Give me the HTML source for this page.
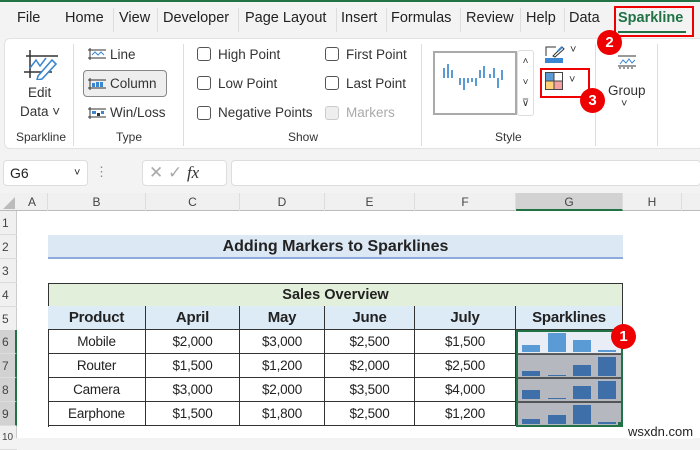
<!DOCTYPE html>
<html><head><meta charset="utf-8"><style>
*{margin:0;padding:0;box-sizing:border-box}
body{width:700px;height:438px;overflow:hidden;background:#f3f3f3;font-family:"Liberation Sans",sans-serif;position:relative;color:#222}
.a{position:absolute}
.tab{position:absolute;top:10px;font-size:14.5px;color:#222}
.sep{position:absolute;top:8px;width:1px;height:24px;background:#ddd}
.rib{position:absolute;left:4px;top:38px;width:700px;height:111px;background:#fff;border-radius:6px;border:1px solid #e2e2e2}
.t{position:absolute;font-size:13.5px;color:#333;white-space:nowrap}
.gl{position:absolute;top:130px;font-size:12px;color:#333}
.vs{position:absolute;top:44px;width:1px;height:102px;background:#ddd}
.cb{position:absolute;width:14px;height:14px;border:1px solid #555;border-radius:3px;background:#fff}
.ch{position:absolute;top:193px;height:18px;font-size:12px;color:#444;text-align:center;line-height:18px;border-right:1px solid #ddd}
.rh{position:absolute;left:0;width:17px;height:24px;font-size:12px;color:#444;line-height:24px;padding-left:2px;border-bottom:1px solid #ddd}
.c{position:absolute;height:24px;font-size:13.5px;text-align:center;line-height:24px;border-right:1px solid #333;border-bottom:1px solid #333;letter-spacing:-0.2px}
.h{font-weight:bold;font-size:15px;background:#ddebf7}
</style></head><body>
<div class="a" style="left:0;top:0;width:700px;height:2px;background:#217346"></div>
<span class="tab" style="left:17px">File</span>
<span class="tab" style="left:65px">Home</span><div class="sep" style="left:113px"></div>
<span class="tab" style="left:119px">View</span><div class="sep" style="left:157px"></div>
<span class="tab" style="left:163px">Developer</span><div class="sep" style="left:238px"></div>
<span class="tab" style="left:245px">Page Layout</span><div class="sep" style="left:336px"></div>
<span class="tab" style="left:341px">Insert</span><div class="sep" style="left:386px"></div>
<span class="tab" style="left:391px">Formulas</span><div class="sep" style="left:460px"></div>
<span class="tab" style="left:466px">Review</span><div class="sep" style="left:520px"></div>
<span class="tab" style="left:526px">Help</span><div class="sep" style="left:564px"></div>
<span class="tab" style="left:569px">Data</span>
<span class="tab" style="left:618px;color:#217346;font-weight:bold">Sparkline</span>
<div class="a" style="left:618px;top:31px;width:68px;height:2px;background:#217346"></div>
<div class="a" style="left:614px;top:6px;width:80px;height:31px;border:2px solid #e00"></div>

<div class="rib"></div>
<svg class="a" style="left:22px;top:48px" width="38" height="32" viewBox="0 0 38 32"><path d="M4 8H36M8 2V30M2 24H30" stroke="#333" stroke-width="1.5" fill="none"/><path d="M8 20L14 12L18 18L24 10" stroke="#3a86d0" stroke-width="1.5" fill="none"/><path d="M16 28L30 12L34 16L20 31L15 32Z" stroke="#3a86d0" stroke-width="1.6" fill="#fff"/></svg>
<span class="t" style="left:28px;top:85px">Edit</span>
<span class="t" style="left:20px;top:104px">Data ˅</span>
<span class="gl" style="left:16px">Sparkline</span>
<div class="vs" style="left:73px"></div>
<svg class="a" style="left:87px;top:47px" width="20" height="14"><path d="M1 3H19M3 1V13M1 11H19" stroke="#333" fill="none"/><path d="M5 8L8 5L11 8L14 5L17 8" stroke="#3a86d0" fill="none"/></svg>
<span class="t" style="left:110px;top:47px">Line</span>
<div class="a" style="left:83px;top:70px;width:84px;height:27px;border:1px solid #888;border-radius:4px;background:#eee"></div>
<svg class="a" style="left:87px;top:77px" width="20" height="14"><path d="M1 3H19M3 1V13M1 11H19" stroke="#333" fill="none"/><rect x="5" y="6" width="3" height="4" fill="#3a86d0"/><rect x="9" y="5" width="3" height="5" fill="#3a86d0"/><rect x="13" y="5" width="3" height="5" fill="#3a86d0"/></svg>
<span class="t" style="left:110px;top:76px">Column</span>
<svg class="a" style="left:87px;top:106px" width="20" height="14"><path d="M1 3H19M3 1V13M1 11H19" stroke="#333" fill="none"/><rect x="5" y="5" width="4" height="3" fill="#3a86d0"/><rect x="10" y="7" width="3" height="3" fill="#333"/><rect x="14" y="5" width="3" height="3" fill="#3a86d0"/></svg>
<span class="t" style="left:110px;top:105px">Win/Loss</span>
<span class="gl" style="left:116px">Type</span>
<div class="vs" style="left:183px"></div>
<div class="cb" style="left:197px;top:47px"></div><span class="t" style="left:218px;top:47px">High Point</span>
<div class="cb" style="left:197px;top:76px"></div><span class="t" style="left:218px;top:76px">Low Point</span>
<div class="cb" style="left:197px;top:106px"></div><span class="t" style="left:218px;top:105px">Negative Points</span>
<div class="cb" style="left:325px;top:47px"></div><span class="t" style="left:346px;top:47px">First Point</span>
<div class="cb" style="left:325px;top:76px"></div><span class="t" style="left:346px;top:76px">Last Point</span>
<div class="cb" style="left:325px;top:106px;border-color:#ccc;background:#eee"></div><span class="t" style="left:346px;top:105px;color:#aaa">Markers</span>
<span class="gl" style="left:288px">Show</span>
<div class="vs" style="left:421px"></div>
<div class="a" style="left:433px;top:51px;width:84px;height:64px;border:2px solid #aaa;background:#fff"></div>
<svg class="a" style="left:440px;top:58px" width="72" height="40"><g fill="#5b9bd5"><rect x="3" y="10" width="2" height="10"/><rect x="7" y="6" width="2" height="14"/><rect x="11" y="12" width="2" height="8"/><rect x="19" y="20" width="2" height="7"/><rect x="23" y="20" width="2" height="12"/><rect x="27" y="20" width="2" height="5"/><rect x="31" y="20" width="2" height="4"/><rect x="35" y="20" width="2" height="8"/><rect x="39" y="12" width="2" height="8"/><rect x="43" y="8" width="2" height="12"/><rect x="49" y="16" width="2" height="4"/><rect x="53" y="10" width="2" height="10"/><rect x="57" y="20" width="2" height="10"/><rect x="61" y="12" width="2" height="10"/></g></svg>
<div class="a" style="left:517px;top:50px;width:17px;height:66px;border:1px solid #ddd;border-radius:3px;background:#fff;font-size:10px;text-align:center;line-height:21px;color:#333">˄<br>˅<br>⊽</div>
<svg class="a" style="left:544px;top:43px" width="22" height="22"><rect x="1" y="15" width="18" height="5" fill="#3a86d0"/><path d="M2 13V4H12M9 13L18 4L20 6L11 14Z" stroke="#333" fill="none"/><path d="M14 8L18 4" stroke="#3a86d0" stroke-width="2"/></svg>
<span class="t" style="left:570px;top:44px;font-size:11px">˅</span>
<svg class="a" style="left:545px;top:72px" width="18" height="18"><rect x="0.5" y="0.5" width="17" height="17" fill="#fff" stroke="#444"/><rect x="1" y="1" width="8" height="8" fill="#5b9bd5"/><rect x="9" y="9" width="8" height="8" fill="#f4a0a0"/><rect x="1" y="9" width="8" height="8" fill="#ffd27a"/><path d="M9 1V17M1 9H17" stroke="#444"/></svg>
<span class="t" style="left:569px;top:74px;font-size:11px">˅</span>
<div class="a" style="left:540px;top:68px;width:50px;height:30px;border:2px solid #e00"></div>
<span class="gl" style="left:495px">Style</span>
<div class="vs" style="left:595px"></div>
<svg class="a" style="left:616px;top:52px" width="22" height="18"><path d="M2 14H20M2 4H20" stroke="#333"/><path d="M4 12L7 8L10 11L13 7L16 11L19 8" stroke="#3a86d0" fill="none"/><path d="M4 15V17M8 15V17M12 15V17M16 15V17" stroke="#333"/></svg>
<span class="t" style="left:608px;top:83px">Group</span>
<span class="t" style="left:621px;top:98px;font-size:11px">˅</span>
<div class="vs" style="left:657px"></div>
<div class="a" style="left:597px;top:30px;width:25px;height:25px;border-radius:50%;background:#e00;color:#fff;font-weight:bold;font-size:15px;text-align:center;line-height:25px">2</div>
<div class="a" style="left:580px;top:88px;width:25px;height:25px;border-radius:50%;background:#e00;color:#fff;font-weight:bold;font-size:15px;text-align:center;line-height:25px">3</div>

<div class="a" style="left:3px;top:160px;width:85px;height:26px;background:#fff;border:1px solid #ddd;border-radius:4px;font-size:14px;line-height:24px;padding-left:6px">G6<span style="position:absolute;left:70px;font-size:11px">˅</span></div>
<span class="a" style="left:95px;top:164px;color:#888;font-size:13px">⋮</span>
<div class="a" style="left:142px;top:160px;width:85px;height:26px;background:#fff;border:1px solid #ddd;border-radius:4px;font-size:17px;color:#aaa;line-height:24px;padding-left:6px">✕ ✓ <i style="color:#333;font-family:'Liberation Serif',serif">fx</i></div>
<div class="a" style="left:231px;top:160px;width:470px;height:26px;background:#fff;border:1px solid #ddd;border-radius:4px"></div>

<div class="a" style="left:0;top:211px;width:700px;height:227px;background:#fff"></div>
<div class="a" style="left:0;top:193px;width:700px;height:18px;background:#f0f0f0;border-bottom:1px solid #bbb"></div>
<div class="a" style="left:0;top:211px;width:17px;height:227px;background:#f0f0f0;border-right:1px solid #ccc"></div>
<svg class="a" style="left:3px;top:197px" width="12" height="12"><path d="M12 0V12H0Z" fill="#bbb"/></svg>
<div class="ch" style="left:17px;width:31px">A</div>
<div class="ch" style="left:48px;width:98px">B</div>
<div class="ch" style="left:146px;width:94px">C</div>
<div class="ch" style="left:240px;width:85px">D</div>
<div class="ch" style="left:325px;width:90px">E</div>
<div class="ch" style="left:415px;width:101px">F</div>
<div class="ch" style="left:516px;width:107px;background:#d2d2d2;border-bottom:2px solid #217346">G</div>
<div class="ch" style="left:623px;width:59px">H</div>
<div class="rh" style="top:211px">1</div><div class="rh" style="top:235px">2</div><div class="rh" style="top:259px">3</div><div class="rh" style="top:283px">4</div><div class="rh" style="top:307px">5</div>
<div class="rh" style="top:330px;background:#d2d2d2;border-right:2px solid #217346">6</div><div class="rh" style="top:354px;background:#d2d2d2;border-right:2px solid #217346">7</div><div class="rh" style="top:378px;background:#d2d2d2;border-right:2px solid #217346">8</div><div class="rh" style="top:402px;background:#d2d2d2;border-right:2px solid #217346">9</div>
<div class="rh" style="top:426px;font-size:10px">10</div>

<div class="a" style="left:48px;top:235px;width:575px;height:24px;background:#dde8f5;border-bottom:2px solid #8eaadb;text-align:center;font-weight:bold;font-size:16px;line-height:24px">Adding Markers to Sparklines</div>

<div class="a" style="left:48px;top:283px;width:575px;height:24px;background:#e2efda;border:1px solid #333;text-align:center;font-weight:bold;font-size:14.5px;line-height:23px">Sales Overview</div>
<div class="a" style="left:48px;top:306px;width:575px;height:121px;border-left:1px solid #333"></div>
<div class="c h" style="left:48px;top:306px;width:98px">Product</div>
<div class="c h" style="left:146px;top:306px;width:94px">April</div>
<div class="c h" style="left:240px;top:306px;width:85px">May</div>
<div class="c h" style="left:325px;top:306px;width:90px">June</div>
<div class="c h" style="left:415px;top:306px;width:101px">July</div>
<div class="c h" style="left:516px;top:306px;width:107px">Sparklines</div>

<div class="c" style="left:48px;top:330px;width:98px">Mobile</div><div class="c" style="left:146px;top:330px;width:94px">$2,000</div><div class="c" style="left:240px;top:330px;width:85px">$3,000</div><div class="c" style="left:325px;top:330px;width:90px">$2,500</div><div class="c" style="left:415px;top:330px;width:101px">$1,500</div>
<div class="c" style="left:48px;top:354px;width:98px">Router</div><div class="c" style="left:146px;top:354px;width:94px">$1,500</div><div class="c" style="left:240px;top:354px;width:85px">$1,200</div><div class="c" style="left:325px;top:354px;width:90px">$2,000</div><div class="c" style="left:415px;top:354px;width:101px">$2,500</div>
<div class="c" style="left:48px;top:378px;width:98px">Camera</div><div class="c" style="left:146px;top:378px;width:94px">$3,000</div><div class="c" style="left:240px;top:378px;width:85px">$2,000</div><div class="c" style="left:325px;top:378px;width:90px">$3,500</div><div class="c" style="left:415px;top:378px;width:101px">$4,000</div>
<div class="c" style="left:48px;top:402px;width:98px">Earphone</div><div class="c" style="left:146px;top:402px;width:94px">$1,500</div><div class="c" style="left:240px;top:402px;width:85px">$1,800</div><div class="c" style="left:325px;top:402px;width:90px">$2,500</div><div class="c" style="left:415px;top:402px;width:101px">$1,200</div>

<svg class="a" style="left:516px;top:330px" width="108" height="98">
<rect x="0" y="0" width="107" height="24" fill="#e9eef6"/>
<rect x="0" y="24" width="107" height="72" fill="#b5b9bf"/>
<path d="M0 24H107M0 48H107M0 72H107" stroke="#333" stroke-width="1.5"/>
<g fill="#5b9bd5"><rect x="6" y="15" width="18" height="7"/><rect x="32" y="3" width="18" height="19"/><rect x="57" y="10" width="18" height="12"/><rect x="82" y="20" width="18" height="2"/></g>
<g fill="#3e6fa8"><rect x="6" y="41" width="18" height="5"/><rect x="32" y="45" width="18" height="1"/><rect x="57" y="35" width="18" height="11"/><rect x="82" y="27" width="18" height="19"/>
<rect x="6" y="60" width="18" height="9"/><rect x="32" y="68" width="18" height="1"/><rect x="57" y="56" width="18" height="13"/><rect x="82" y="51" width="18" height="18"/>
<rect x="6" y="89" width="18" height="5"/><rect x="32" y="85" width="18" height="9"/><rect x="57" y="75" width="18" height="19"/><rect x="82" y="92" width="18" height="2"/></g>
<rect x="1" y="1" width="105" height="95" fill="none" stroke="#217346" stroke-width="2"/>
<rect x="102" y="92" width="5" height="5" fill="#217346"/>
</svg>
<div class="a" style="left:611px;top:324px;width:25px;height:25px;border-radius:50%;background:#e00;color:#fff;font-weight:bold;font-size:15px;text-align:center;line-height:25px">1</div>
<span class="a" style="left:628px;top:424px;font-size:13px;color:#222;background:#fff">wsxdn.com</span>
</body></html>
